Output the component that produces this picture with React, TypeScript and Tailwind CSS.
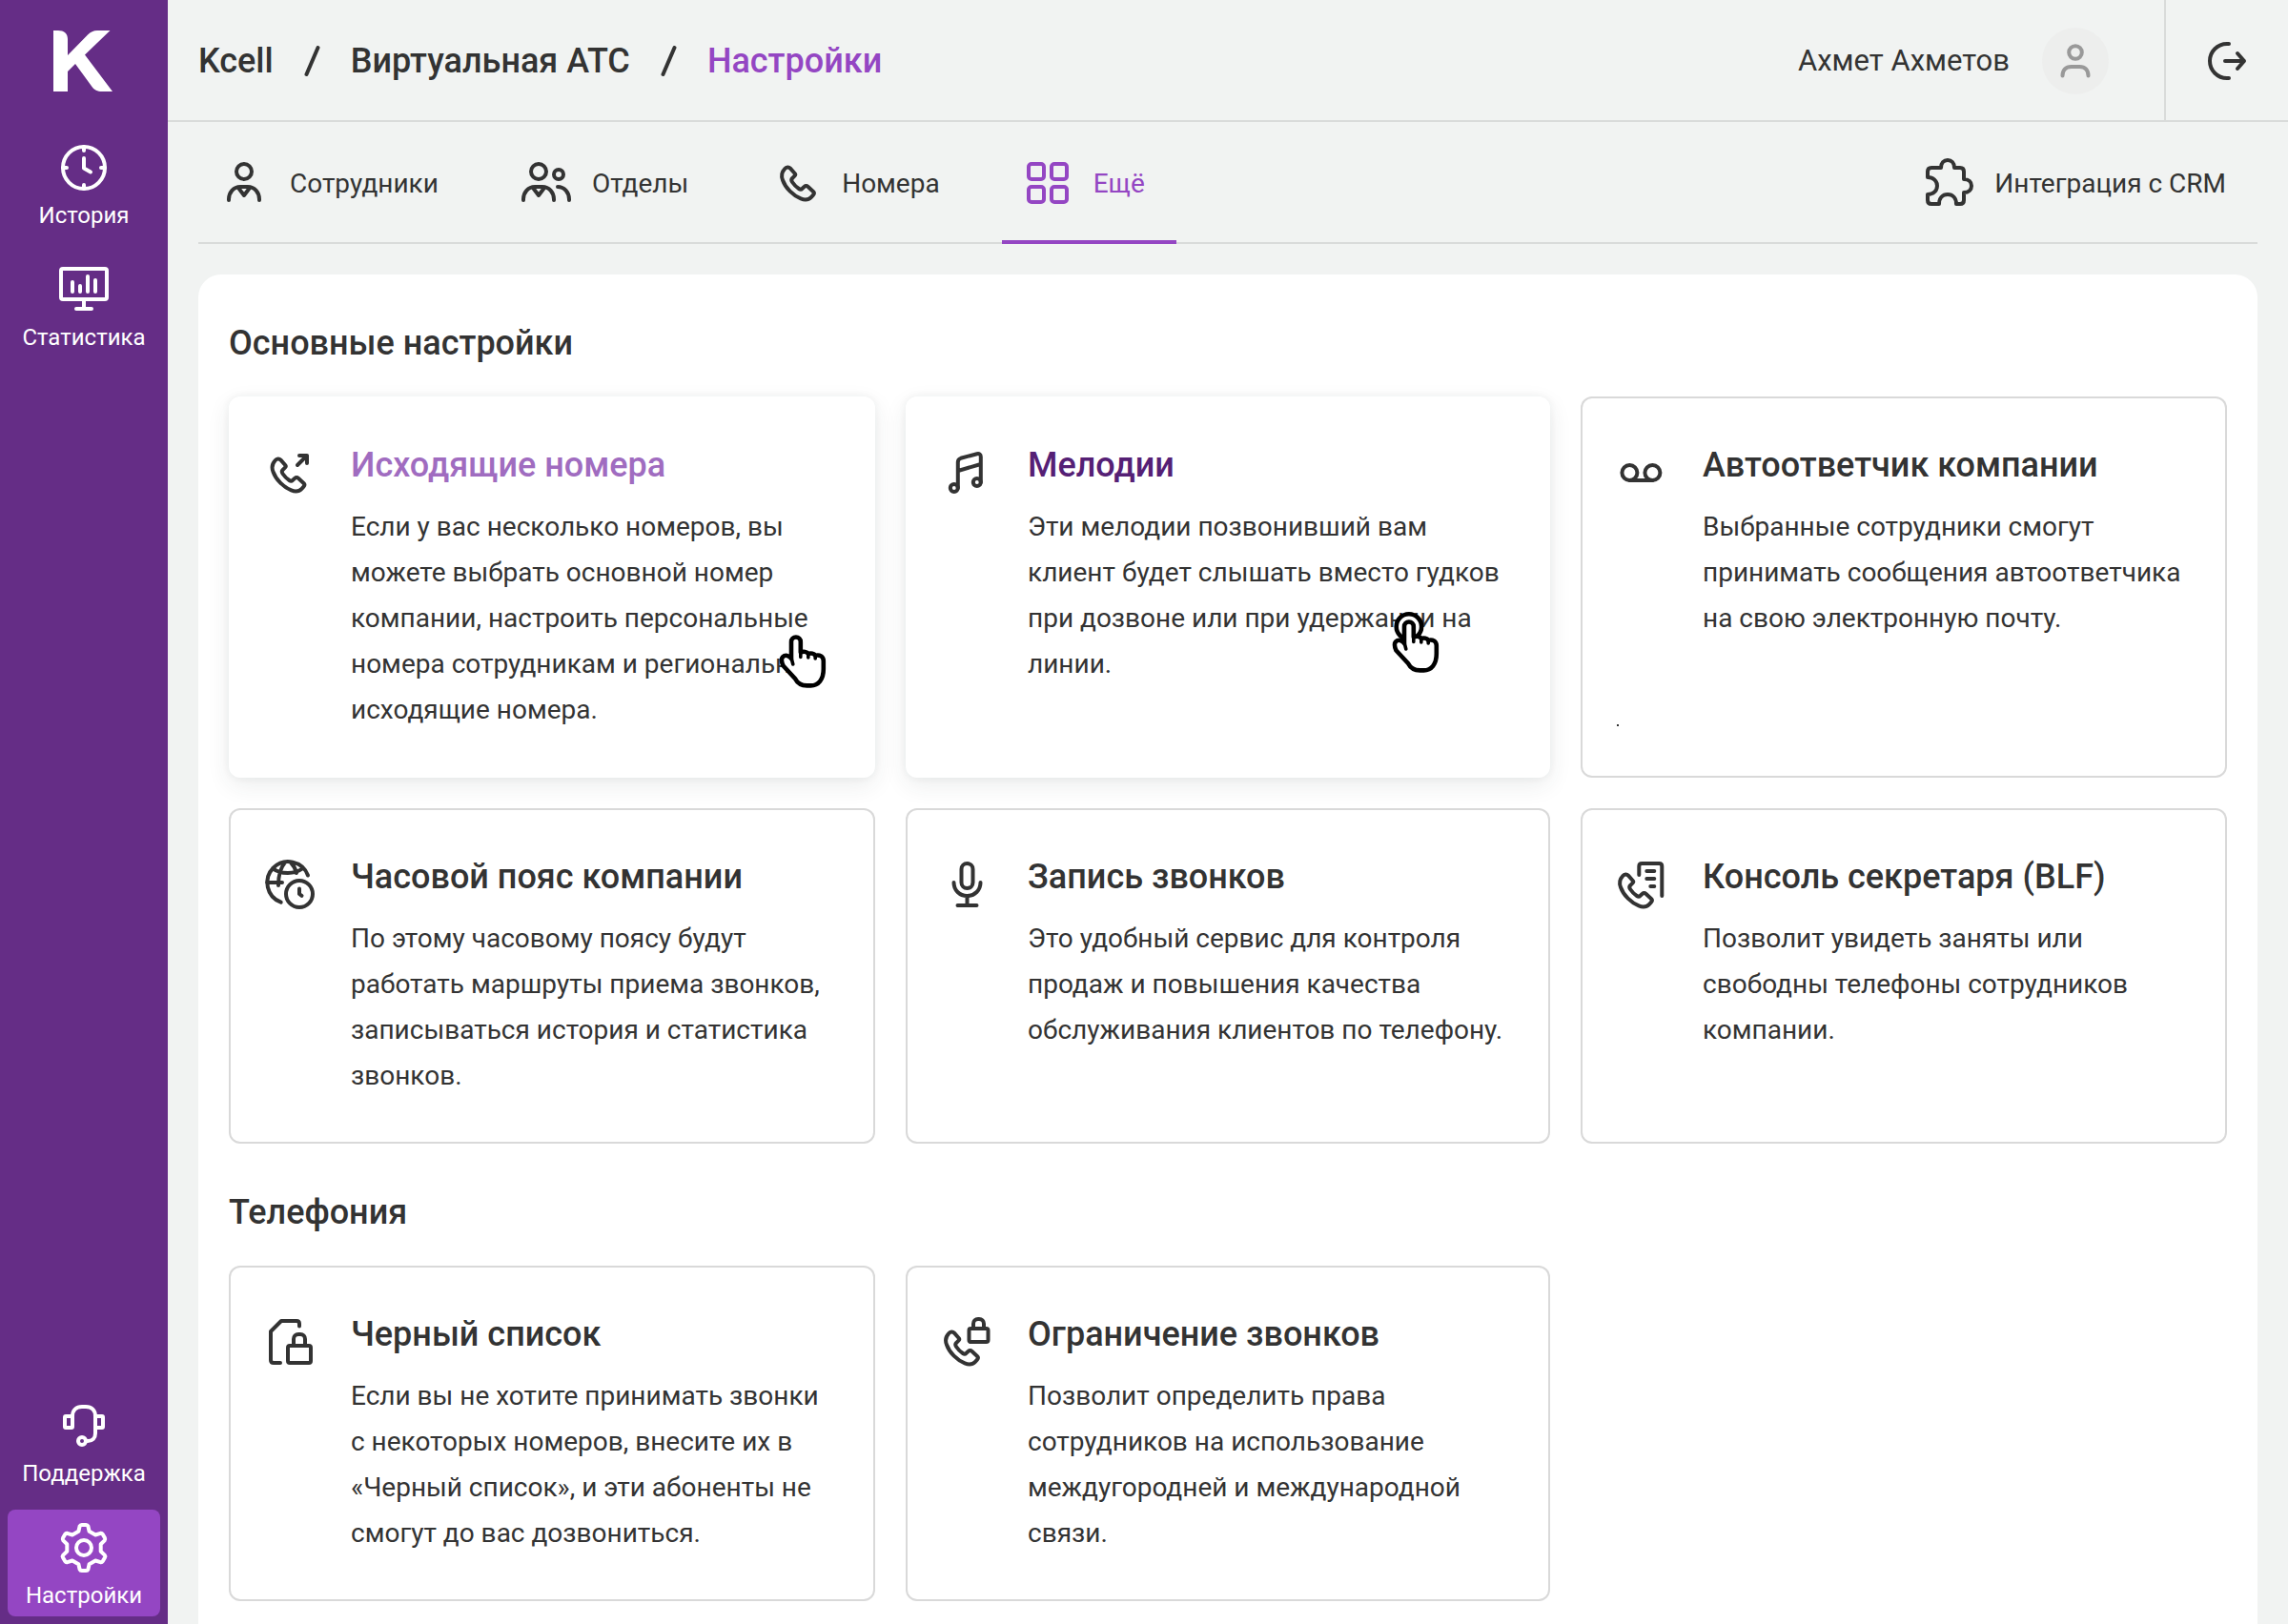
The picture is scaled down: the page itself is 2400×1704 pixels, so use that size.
import type { ReactNode } from "react";
import { clsx } from "clsx";

const PHONE =
  "M12 23.3C14 21 16.4 21 18 22.7L22.7 28C23.5 29 23.5 29.6 22.7 30.4L20.3 32.8C19 34 19 35.5 20 37C22 40 24 42 27 44C28.4 45 29.6 44.8 30.6 43.8L32.8 41.8C33.8 40.8 35.4 40.8 36.4 41.8L42 47C43.1 48.1 43.1 49.5 42 50.7L40 52.8C37.5 55.4 33 56 29 54.4C21 51.2 13 43.5 10 35C8.3 30.6 9 26.5 12 23.3Z";

const HAND =
  "M13 25V7.4a4.9 4.9 0 0 1 9.8 0V18.5c3-1.4 6.6-.7 8 1.5 2.8-1 6-.3 7.4 1.8 4.6-1.2 8.6.8 8.6 5.7V36c0 11-5.4 17.4-13.3 17.4h-4c-6 0-10-2.4-12.5-7.4L4.5 32.5C3 29 1.8 25.6 4 23.3 6.5 20.8 10.8 21.5 13 25z";

const icons: Record<string, ReactNode> = {
  clock: (
    <>
      <circle cx="32" cy="32" r="22" />
      <path d="M32 10v4M32 50v4M10 32h4M50 32h4M32 22v10.5l7 4" />
    </>
  ),
  monitor: (
    <>
      <rect x="8" y="10" width="48" height="32" rx="2" />
      <path d="M32 42v10M24 52h16M20 24v10M28 28v6M36 18v16M44 22v12" />
    </>
  ),
  headset: (
    <>
      <rect x="12" y="22" width="8" height="12" rx="1" />
      <rect x="44" y="22" width="8" height="12" rx="1" />
      <path d="M20 24v-2c0-6 4-10 10-10h4c6 0 10 4 10 10v18c0 5-3 8-8 8h-2" />
      <circle cx="30" cy="48" r="4" />
    </>
  ),
  gear: (
    <>
      <path d="M26.4 14.8L27.6 9.4Q28.2 8 29.8 8H34.2Q35.8 8 36.4 9.4L37.6 14.8L44.1 18.5L49.4 16.8Q50.9 16.5 51.7 17.8L54 21.8Q54.7 23.2 53.7 24.4L49.7 28.2V35.8L53.7 39.6Q54.7 40.8 54 42.2L51.7 46.2Q50.9 47.5 49.4 47.2L44.1 45.5L37.6 49.2L36.4 54.6Q35.8 56 34.2 56H29.8Q28.2 56 27.6 54.6L26.4 49.2L19.9 45.5L14.6 47.2Q13.1 47.5 12.3 46.2L10 42.2Q9.3 40.8 10.3 39.6L14.3 35.8V28.2L10.3 24.4Q9.3 23.2 10 21.8L12.3 17.8Q13.1 16.5 14.6 16.8L19.9 18.5Z" />
      <circle cx="32" cy="32" r="8" />
    </>
  ),
  employee: (
    <>
      <circle cx="32" cy="20" r="8" />
      <path d="M16 50v-1c0-7 5-13 12-13h8c7 0 12 6 12 13v1M26 37l6 8 6-8" />
    </>
  ),
  departments: (
    <>
      <circle cx="24" cy="20" r="8" />
      <circle cx="45" cy="23" r="5" />
      <path d="M8 50v-1c0-7 5-13 12-13h8c7 0 12 6 12 13v1M18 37l6 8 6-8M44 36c7 0 12 6 12 13v1" />
    </>
  ),
  phone: <path d={PHONE} transform="translate(8 -6)" />,
  grid: (
    <>
      <rect x="12" y="12" width="16" height="16" rx="3" />
      <rect x="36" y="12" width="16" height="16" rx="3" />
      <rect x="12" y="36" width="16" height="16" rx="3" />
      <rect x="36" y="36" width="16" height="16" rx="3" />
    </>
  ),
  puzzle: (
    <path d="M14 16h10c0-5 3-8 7-8s7 3 7 8h6c2.5 0 4 1.5 4 4v8c5 0 8 3 8 7s-3 7-8 7v8c0 2.5-1.5 4-4 4h-4c0-6-3.5-10-9-10s-9 4-9 10h-8c-2.5 0-4-1.5-4-4v-6c6 0 10-4 10-9s-4-9-10-9v-6c0-2.5 1.5-4 4-4z" />
  ),
  logout: <path d="M34 14h-2a18 18 0 0 0 0 36h2M30 32h20M43 24l7 8-7 8" />,
  outgoing: (
    <>
      <path d={PHONE} transform="translate(4.5 -4)" />
      <path d="M40 24l10-10M42 14h8v8" />
    </>
  ),
  music: (
    <>
      <circle cx="18.8" cy="48" r="4" />
      <circle cx="42.8" cy="42" r="4" />
      <path d="M22.8 48V21c0-2 1-3.6 3-4.2l17-4.6c2.4-.6 4 .6 4 3V42M23 30l23.8-7" />
    </>
  ),
  voicemail: (
    <>
      <circle cx="19.4" cy="32" r="8" />
      <circle cx="43.4" cy="32" r="8" />
      <path d="M19.4 40h24" />
    </>
  ),
  timezone: (
    <>
      <path d="M51 22.5A22 22 0 1 0 22.7 50.7M8 30h16M14 15c4 3.5 10 5 16 5s11-1.5 15-4.5M27 9c-4.5 5-7 13-7 24M33 9c3 3 5 7 6 11" />
      <circle cx="42" cy="42" r="14" />
      <path d="M42 36.5v5.5l2.5 1.8" />
    </>
  ),
  microphone: (
    <>
      <rect x="26.5" y="10" width="12" height="26" rx="6" />
      <path d="M18.5 30c0 8 6 14 14 14s14-6 14-14M32.5 44v10M22.5 54h20" />
    </>
  ),
  console: (
    <>
      <path d={PHONE} />
      <path d="M29.3 22v-9c0-2 1-3 3-3h18c2 0 3 1 3 3v31M37.3 18h8M37.3 26h8M41.3 34h4" />
    </>
  ),
  blacklist: (
    <>
      <path d="M22 54h-7c-2 0-3-1-3-3V21L23 10h16c2 0 3 1 3 3v2.5" />
      <rect x="30" y="36" width="24" height="18" rx="2" />
      <path d="M36 36v-7c0-3 2-5 5-5h2c3 0 5 2 5 5v7" />
    </>
  ),
  restriction: (
    <>
      <path d={PHONE} transform="translate(1 0)" />
      <rect x="34.5" y="18" width="20" height="14" rx="2" />
      <path d="M39 18v-5c0-3 2-5 5-5h1c3 0 5 2 5 5v5" />
    </>
  ),
};

function Icon({ name }: { name: string }) {
  return (
    <svg
      viewBox="0 0 64 64"
      className="size-16 shrink-0"
      fill="none"
      stroke="currentColor"
      strokeWidth="4"
      strokeLinecap="round"
      strokeLinejoin="round"
      aria-hidden="true"
    >
      {icons[name]}
    </svg>
  );
}

function HandCursor({ pressed = false }: { pressed?: boolean }) {
  return (
    <svg
      viewBox="0 0 50 64"
      className={clsx(
        "absolute w-[50px] h-16 pointer-events-none",
        pressed ? "left-[510px] top-[226px]" : "left-[577px] top-[242px]"
      )}
      fill="white"
      stroke="black"
      strokeWidth="4.6"
      strokeLinecap="round"
      strokeLinejoin="round"
      aria-hidden="true"
    >
      {pressed && <circle cx="17.9" cy="15.5" r="13.2" />}
      <g transform="translate(0 8)">
        <path d={HAND} />
        <path d="M22.8 18v5.5M30.8 20v4M38.2 22v3M13 24l1.8 7" strokeWidth="3.6" />
      </g>
    </svg>
  );
}

type Card = {
  icon: string;
  title: string;
  text: string;
  state?: "hover" | "pressed";
  dot?: boolean;
};

const mainSettings: Card[] = [
  {
    icon: "outgoing",
    title: "Исходящие номера",
    text: "Если у вас несколько номеров, вы можете выбрать основной номер компании, настроить персональные номера сотрудникам и региональные исходящие номера.",
    state: "hover",
  },
  {
    icon: "music",
    title: "Мелодии",
    text: "Эти мелодии позвонивший вам клиент будет слышать вместо гудков при дозвоне или при удержании на линии.",
    state: "pressed",
  },
  {
    icon: "voicemail",
    title: "Автоответчик компании",
    text: "Выбранные сотрудники смогут принимать сообщения автоответчика на свою электронную почту.",
    dot: true,
  },
  {
    icon: "timezone",
    title: "Часовой пояс компании",
    text: "По этому часовому поясу будут работать маршруты приема звонков, записываться история и статистика звонков.",
  },
  {
    icon: "microphone",
    title: "Запись звонков",
    text: "Это удобный сервис для контроля продаж и повышения качества обслуживания клиентов по телефону.",
  },
  {
    icon: "console",
    title: "Консоль секретаря (BLF)",
    text: "Позволит увидеть заняты или свободны телефоны сотрудников компании.",
  },
];

const telephony: Card[] = [
  {
    icon: "blacklist",
    title: "Черный список",
    text: "Если вы не хотите принимать звонки с некоторых номеров, внесите их в «Черный список», и эти абоненты не смогут до вас дозвониться.",
  },
  {
    icon: "restriction",
    title: "Ограничение звонков",
    text: "Позволит определить права сотрудников на использование междугородней и международной связи.",
  },
];

const tabs = [
  { icon: "employee", label: "Сотрудники" },
  { icon: "departments", label: "Отделы" },
  { icon: "phone", label: "Номера" },
  { icon: "grid", label: "Ещё", active: true },
];

function SettingsCard({ card }: { card: Card }) {
  return (
    <a
      href="#"
      className={clsx(
        "relative flex gap-8 rounded-xl bg-white pt-12 pb-[47px] pl-8 pr-10",
        card.state
          ? "shadow-[0_0_8px_rgba(40,50,50,0.06),0_8px_24px_rgba(40,50,50,0.09)]"
          : "inset-ring-2 inset-ring-[#d9d9d9]"
      )}
    >
      <Icon name={card.icon} />
      <div className="min-w-0 flex-1">
        <h3
          className={clsx(
            "text-4xl leading-[48px] font-medium",
            card.state === "hover" && "text-[#a06cc0]",
            card.state === "pressed" && "text-[#552075]"
          )}
        >
          {card.title}
        </h3>
        <p className="mt-[17px] text-[28px] leading-[48px]">{card.text}</p>
      </div>
      {card.state && <HandCursor pressed={card.state === "pressed"} />}
      {card.dot && <span className="absolute bottom-[54px] left-[38px] size-0.5 bg-[#333333]" />}
    </a>
  );
}

function Section({ title, cards }: { title: string; cards: Card[] }) {
  return (
    <section className="pt-12">
      <h2 className="text-4xl leading-[48px] font-medium">{title}</h2>
      <div className="mt-8 grid grid-cols-[678fr_676fr_678fr] gap-8">
        {cards.map((card) => (
          <SettingsCard key={card.title} card={card} />
        ))}
      </div>
    </section>
  );
}

function SideLink({ icon, label, active = false }: { icon: string; label: string; active?: boolean }) {
  return (
    <a
      href="#"
      className={clsx("flex flex-col items-center rounded-lg pt-2 pb-1 text-2xl leading-9", active && "bg-[#9446c3]")}
    >
      <Icon name={icon} />
      {label}
    </a>
  );
}

function Tab({ icon, label, active = false }: { icon: string; label: string; active?: boolean }) {
  return (
    <a
      href="#"
      className={clsx(
        "flex items-center gap-4 pl-4 pr-[33px]",
        active && "text-[#9446c3] shadow-[inset_0_-4px_0_#9446c3]"
      )}
    >
      <Icon name={icon} />
      <span className="pt-0.5">{label}</span>
    </a>
  );
}

function Slash() {
  return (
    <svg viewBox="0 0 16 32" className="h-8 w-[17px]" stroke="currentColor" strokeWidth="4" strokeLinecap="round" aria-hidden="true">
      <path d="M14 2L2 30" />
    </svg>
  );
}

export default function App() {
  return (
    <div className="flex h-screen overflow-hidden bg-[#f1f3f2] font-['Roboto',sans-serif] text-[#333333]">
      <aside className="flex w-44 shrink-0 flex-col bg-[#652d86] px-2 pt-8 pb-2 text-white">
        <a href="#" aria-label="Kcell" className="mb-10 self-center">
          <svg viewBox="56 32 64 64" className="size-16" fill="currentColor">
            <path d="M56 32h5c6 0 10 3 10 9v17L92 36.5c3-3 6-4.5 10-4.5h13.5L89 57.500l29 38.500h-11c-5 0-8-1.500-10.500-5L79 67l-8 8v21H56z" />
          </svg>
        </a>
        <nav className="flex flex-1 flex-col gap-4">
          <SideLink icon="clock" label="История" />
          <SideLink icon="monitor" label="Статистика" />
          <div className="flex-1" />
          <SideLink icon="headset" label="Поддержка" />
          <SideLink icon="gear" label="Настройки" active />
        </nav>
      </aside>

      <div className="flex min-w-0 flex-1 flex-col">
        <header className="flex h-32 shrink-0 pl-8 shadow-[inset_0_-2px_0_#d9dbda]">
          <nav className="flex flex-1 items-center gap-8 text-4xl font-medium">
            <a href="#">Kcell</a>
            <Slash />
            <a href="#">Виртуальная АТС</a>
            <Slash />
            <a href="#" className="text-[#9446c3]">Настройки</a>
          </nav>
          <div className="flex items-center gap-[34px] pr-[58px] text-[31px]">
            Ахмет Ахметов
            <span className="flex size-[70px] items-center justify-center rounded-full bg-[#edeeed] text-[#999999]">
              <svg viewBox="0 0 64 64" className="size-16" fill="none" stroke="currentColor" strokeWidth="4" strokeLinecap="round" aria-hidden="true">
                <circle cx="32" cy="23" r="6.8" />
                <path d="M18.5 47.5c0-6 3.500-9.500 9-9.500h9c5.500 0 9 3.500 9 9.500" />
              </svg>
            </span>
          </div>
          <button type="button" aria-label="Выйти" className="flex w-[130px] items-center justify-center border-l-2 border-[#d9dbda]">
            <Icon name="logout" />
          </button>
        </header>

        <main className="min-h-0 flex-1 overflow-y-auto px-8 [scrollbar-width:none]">
          <nav className="flex h-32 gap-8 text-[28px] shadow-[inset_0_-2px_0_#d9dbda]">
            {tabs.map((tab) => (
              <Tab key={tab.label} {...tab} />
            ))}
            <div className="ml-auto flex">
              <Tab icon="puzzle" label="Интеграция с CRM" />
            </div>
          </nav>
          <div className="mt-8 rounded-3xl bg-white px-8 pb-12">
            <Section title="Основные настройки" cards={mainSettings} />
            <Section title="Телефония" cards={telephony} />
          </div>
        </main>
      </div>
    </div>
  );
}
